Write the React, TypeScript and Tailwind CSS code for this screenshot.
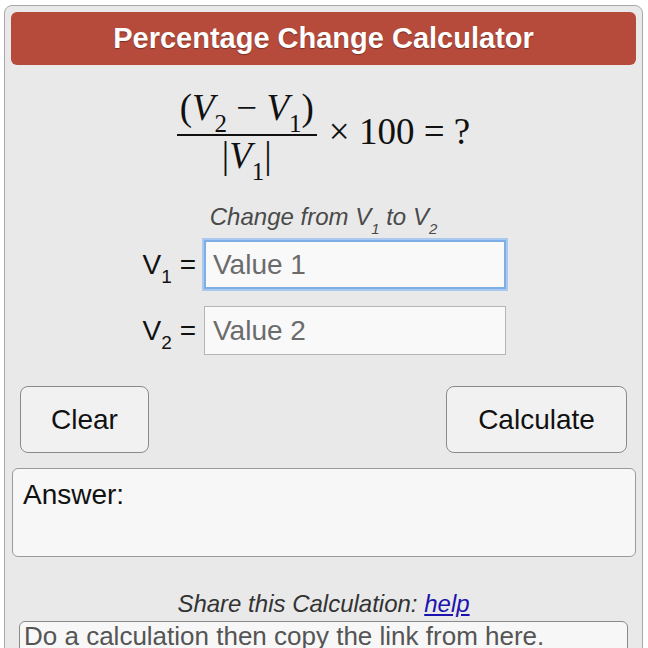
export default function App() {
  const sans = { fontFamily: '"Liberation Sans", Arial, sans-serif' };
  return (
    <div className="w-[648px] h-[648px] overflow-hidden bg-white pt-[5px] pl-[4px]" style={sans}>
      <div className="w-[639px] h-[700px] rounded-lg border border-[#a8a8a8] bg-[#e9e9e9] px-[6px] pt-[6px]">
        {/* Header */}
        <div className="h-[53px] rounded-md bg-[#b64a3b] flex items-center justify-center text-white font-bold text-[29px] [text-shadow:0_1px_1px_rgba(0,0,0,0.35)]">
          Percentage Change Calculator
        </div>

        {/* Formula */}
        <div
          className="mt-[23px] flex items-center justify-center gap-[12px] text-[37px] text-[#111]"
          style={{ fontFamily: '"Liberation Serif", "Times New Roman", serif' }}
        >
          <div className="flex flex-col items-center">
            <div className="h-[40px] leading-[40px] mb-[6px] whitespace-nowrap">
              (<i>V</i><sub className="text-[25px] align-[-6px]">2</sub> − <i>V</i>
              <sub className="text-[25px] align-[-6px]">1</sub>)
            </div>
            <div className="h-[2px] w-[140px] bg-[#111]" />
            <div className="h-[40px] leading-[40px] whitespace-nowrap">
              |<i>V</i><sub className="text-[25px] align-[-6px]">1</sub>|
            </div>
          </div>
          <div className="leading-[40px] whitespace-nowrap">× 100 = ?</div>
        </div>

        {/* Change from */}
        <div className="mt-[29px] h-[24px] text-center italic text-[24px] text-[#4a4a4a] leading-none whitespace-nowrap">
          Change from V<sub className="text-[15px] align-[-5px]">1</sub> to V
          <sub className="text-[15px] align-[-5px]">2</sub>
        </div>

        {/* Inputs */}
        <div className="mt-[11px] h-[49px] flex items-center">
          <div className="w-[185px] text-right text-[28px] leading-none text-[#111]">
            V<sub className="text-[19px] align-[-5px]">1</sub> =
          </div>
          <div className="ml-[8px] w-[302px] h-[49px] border-2 border-[#7eaee6] bg-[#f9f9f9] shadow-[0_0_0_2px_#a9c9ee] flex items-center pl-[7px] text-[28px] text-[#6b6b6b]">
            Value 1
          </div>
        </div>
        <div className="mt-[17px] h-[49px] flex items-center">
          <div className="w-[185px] text-right text-[28px] leading-none text-[#111]">
            V<sub className="text-[19px] align-[-5px]">2</sub> =
          </div>
          <div className="ml-[8px] w-[302px] h-[49px] border border-[#b5b5b5] bg-[#f9f9f9] flex items-center pl-[8px] text-[28px] text-[#6b6b6b]">
            Value 2
          </div>
        </div>

        {/* Buttons */}
        <div className="mt-[31px] flex justify-between px-[9px]">
          <button className="w-[129px] h-[67px] rounded-lg border border-[#8a8a8a] bg-[#f1f1f1] text-[28px] text-[#111]">
            Clear
          </button>
          <button className="w-[181px] h-[67px] rounded-lg border border-[#8a8a8a] bg-[#f1f1f1] text-[28px] text-[#111]">
            Calculate
          </button>
        </div>

        {/* Answer */}
        <div className="mt-[15px] ml-[1px] h-[89px] rounded-md border border-[#9a9a9a] bg-[#f7f7f7] px-[10px] pt-[12px] text-[28px] text-[#111] leading-none">
          Answer:
        </div>

        {/* Share */}
        <div className="mt-[35px] h-[24px] text-center italic text-[24px] text-[#333] leading-none whitespace-nowrap">
          Share this Calculation:{" "}
          <a className="text-[#1d14b0] underline">help</a>
        </div>
        <div className="mt-[5px] mx-[8px] h-[40px] rounded-md border border-[#8a8a8a] bg-[#f7f7f7] pl-[4px] pt-[1px] text-[26px] text-[#555] leading-none whitespace-nowrap">
          Do a calculation then copy the link from here.
        </div>
      </div>
    </div>
  );
}
